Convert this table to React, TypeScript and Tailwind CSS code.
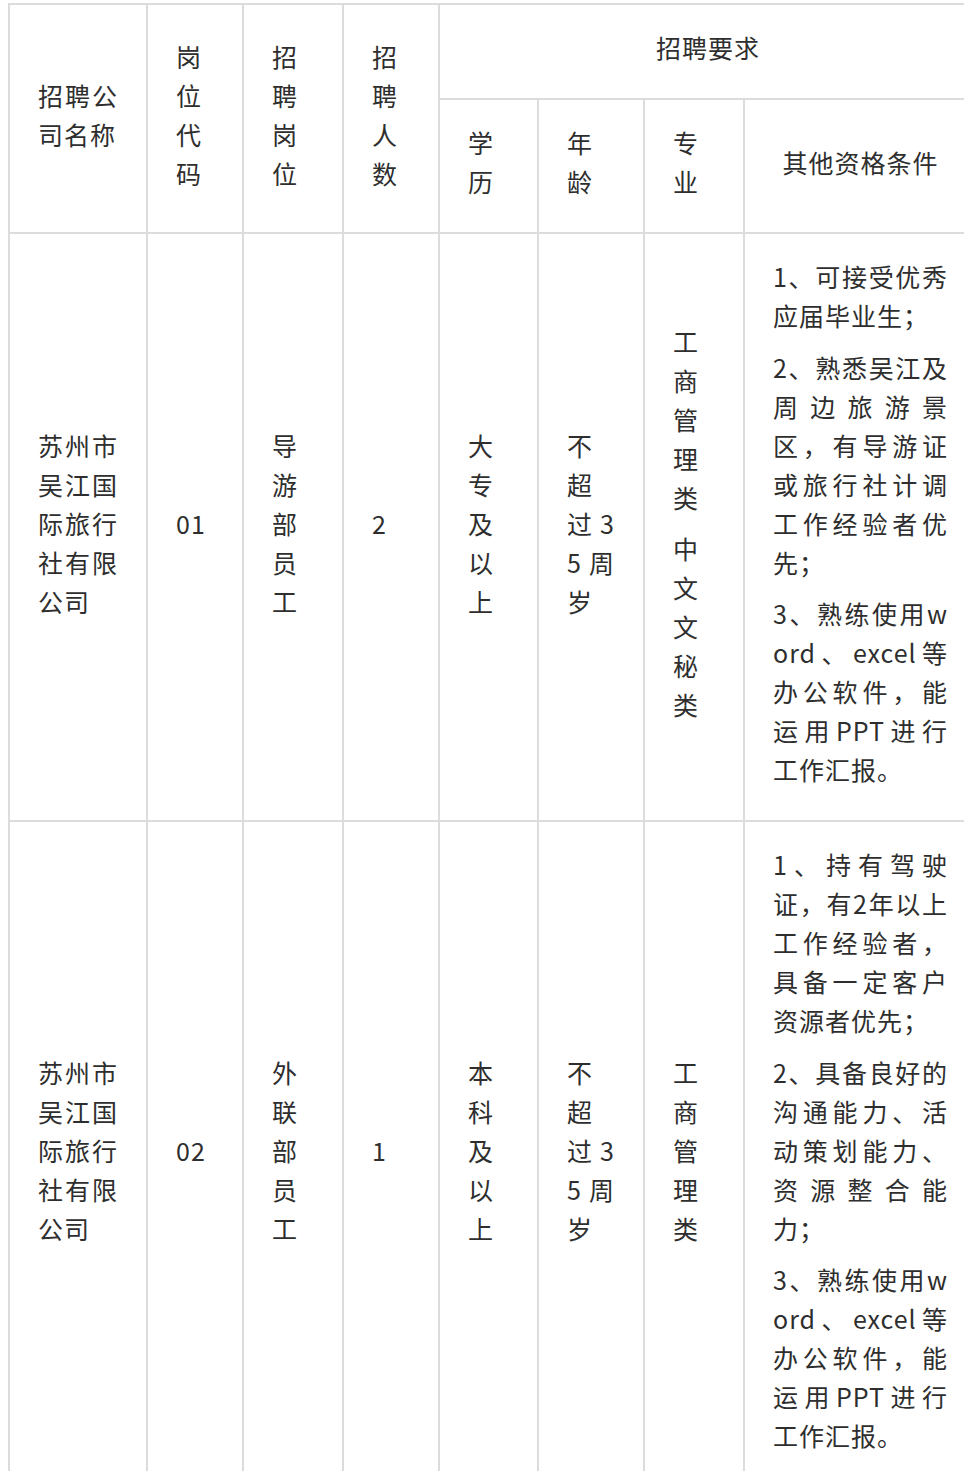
import React from "react";

const cell =
  "border-2 border-[#dcdcdc] px-[28px] pt-[23px] pb-[31px] align-middle text-justify break-all";
const cellCenter =
  "border-2 border-[#dcdcdc] px-[28px] pt-[23px] pb-[31px] align-middle text-center break-all";

function Paras({ items }: { items: string[] }) {
  return (
    <div className="flex flex-col gap-[12.5px]">
      {items.map((t, i) => (
        <p key={i} className="m-0">
          {t}
        </p>
      ))}
    </div>
  );
}

const rows = [
  {
    company: "苏州市吴江国际旅行社有限公司",
    code: "01",
    post: "导游部员工",
    count: "2",
    edu: "大专及以上",
    age: "不超过35周岁",
    major: ["工商管理类", "中文文秘类"],
    other: [
      "1、可接受优秀应届毕业生；",
      "2、熟悉吴江及周边旅游景区，有导游证或旅行社计调工作经验者优先；",
      "3、熟练使用word、excel等办公软件，能运用PPT进行工作汇报。",
    ],
  },
  {
    company: "苏州市吴江国际旅行社有限公司",
    code: "02",
    post: "外联部员工",
    count: "1",
    edu: "本科及以上",
    age: "不超过35周岁",
    major: ["工商管理类"],
    other: [
      "1、持有驾驶证，有2年以上工作经验者，具备一定客户资源者优先；",
      "2、具备良好的沟通能力、活动策划能力、资源整合能力；",
      "3、熟练使用word、excel等办公软件，能运用PPT进行工作汇报。",
    ],
  },
];

export default function App() {
  return (
    <div className="w-[964px] overflow-hidden bg-white">
      <div className="pl-[8px] pt-[3px] pb-[20px]">
        <table className="w-[968px] table-fixed border-collapse text-[25px] leading-[39px] tracking-[1px] text-[#2e2e2e] font-['Noto_Sans_CJK_SC','Noto_Sans',sans-serif]">
          <colgroup>
            <col className="w-[138px]" />
            <col className="w-[96px]" />
            <col className="w-[100px]" />
            <col className="w-[96px]" />
            <col className="w-[99px]" />
            <col className="w-[106px]" />
            <col className="w-[100px]" />
            <col className="w-[233px]" />
          </colgroup>
          <tbody>
            <tr>
              <td rowSpan={2} className={cell}>
                招聘公司名称
              </td>
              <td rowSpan={2} className={cell}>
                岗位代码
              </td>
              <td rowSpan={2} className={cell}>
                招聘岗位
              </td>
              <td rowSpan={2} className={cell}>
                招聘人数
              </td>
              <td colSpan={4} className={cellCenter}>
                招聘要求
              </td>
            </tr>
            <tr>
              <td className={cell}>学历</td>
              <td className={cell}>年龄</td>
              <td className={cell}>专业</td>
              <td className={cellCenter}>其他资格条件</td>
            </tr>
            {rows.map((r) => (
              <tr key={r.code}>
                <td className={cell}>{r.company}</td>
                <td className={cell}>{r.code}</td>
                <td className={cell}>{r.post}</td>
                <td className={cell}>{r.count}</td>
                <td className={cell}>{r.edu}</td>
                <td className={cell}>{r.age}</td>
                <td className={cell}>
                  <Paras items={r.major} />
                </td>
                <td className={cell}>
                  <Paras items={r.other} />
                </td>
              </tr>
            ))}
          </tbody>
        </table>
      </div>
    </div>
  );
}
